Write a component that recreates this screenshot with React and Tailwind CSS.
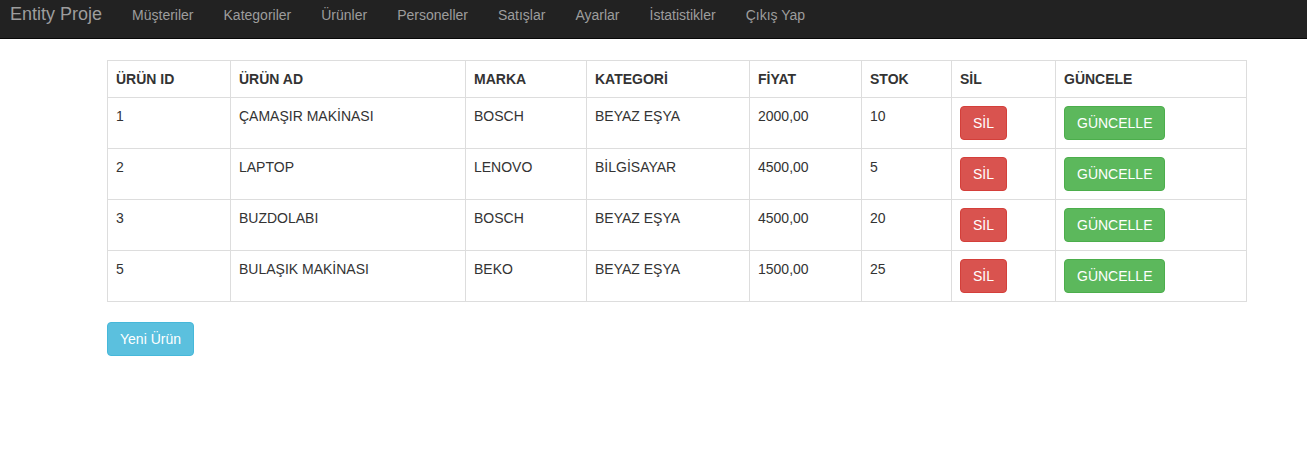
const navItems = ["Müşteriler", "Kategoriler", "Ürünler", "Personeller", "Satışlar", "Ayarlar", "İstatistikler", "Çıkış Yap"];

const columns = [
  { label: "ÜRÜN ID", width: "w-[123px]" },
  { label: "ÜRÜN AD", width: "w-[235px]" },
  { label: "MARKA", width: "w-[121px]" },
  { label: "KATEGORİ", width: "w-[163px]" },
  { label: "FİYAT", width: "w-[112px]" },
  { label: "STOK", width: "w-[90px]" },
  { label: "SİL", width: "w-[104px]" },
  { label: "GÜNCELE", width: "" },
];

const products = [
  { id: 1, name: "ÇAMAŞIR MAKİNASI", brand: "BOSCH", category: "BEYAZ EŞYA", price: "2000,00", stock: 10 },
  { id: 2, name: "LAPTOP", brand: "LENOVO", category: "BİLGİSAYAR", price: "4500,00", stock: 5 },
  { id: 3, name: "BUZDOLABI", brand: "BOSCH", category: "BEYAZ EŞYA", price: "4500,00", stock: 20 },
  { id: 5, name: "BULAŞIK MAKİNASI", brand: "BEKO", category: "BEYAZ EŞYA", price: "1500,00", stock: 25 },
];

const cell = "border border-[#ddd] px-2 py-2 align-top leading-5";

export default function App() {
  return (
    <div className="min-h-screen bg-white text-[14px] text-[#333] font-['Liberation_Sans',Arial,sans-serif]">
      <nav className="h-[39px] bg-[#222] border-b border-[#080808] flex items-start">
        <a className="pl-[10px] pr-[15px] pt-[4px] text-[18px] leading-5 text-[#9d9d9d]">Entity Proje</a>
        {navItems.map((item) => (
          <a key={item} className="px-[15px] pt-[5px] leading-5 text-[#9d9d9d]">
            {item}
          </a>
        ))}
      </nav>

      <div className="ml-[107px] w-[1140px] pt-[21px]">
        <table className="w-full border-collapse border border-[#ddd] mb-5">
          <thead>
            <tr>
              {columns.map((c) => (
                <th key={c.label} className={`${cell} ${c.width} text-left font-bold`}>
                  {c.label}
                </th>
              ))}
            </tr>
          </thead>
          <tbody>
            {products.map((p) => (
              <tr key={p.id}>
                <td className={cell}>{p.id}</td>
                <td className={cell}>{p.name}</td>
                <td className={cell}>{p.brand}</td>
                <td className={cell}>{p.category}</td>
                <td className={cell}>{p.price}</td>
                <td className={cell}>{p.stock}</td>
                <td className={cell}>
                  <button className="h-[34px] px-3 rounded border border-[#d43f3a] bg-[#d9534f] text-white leading-5">SİL</button>
                </td>
                <td className={cell}>
                  <button className="h-[34px] px-3 rounded border border-[#4cae4c] bg-[#5cb85c] text-white leading-5">GÜNCELLE</button>
                </td>
              </tr>
            ))}
          </tbody>
        </table>
        <button className="h-[34px] px-3 rounded border border-[#46b8da] bg-[#5bc0de] text-white leading-5">Yeni Ürün</button>
      </div>
    </div>
  );
}
